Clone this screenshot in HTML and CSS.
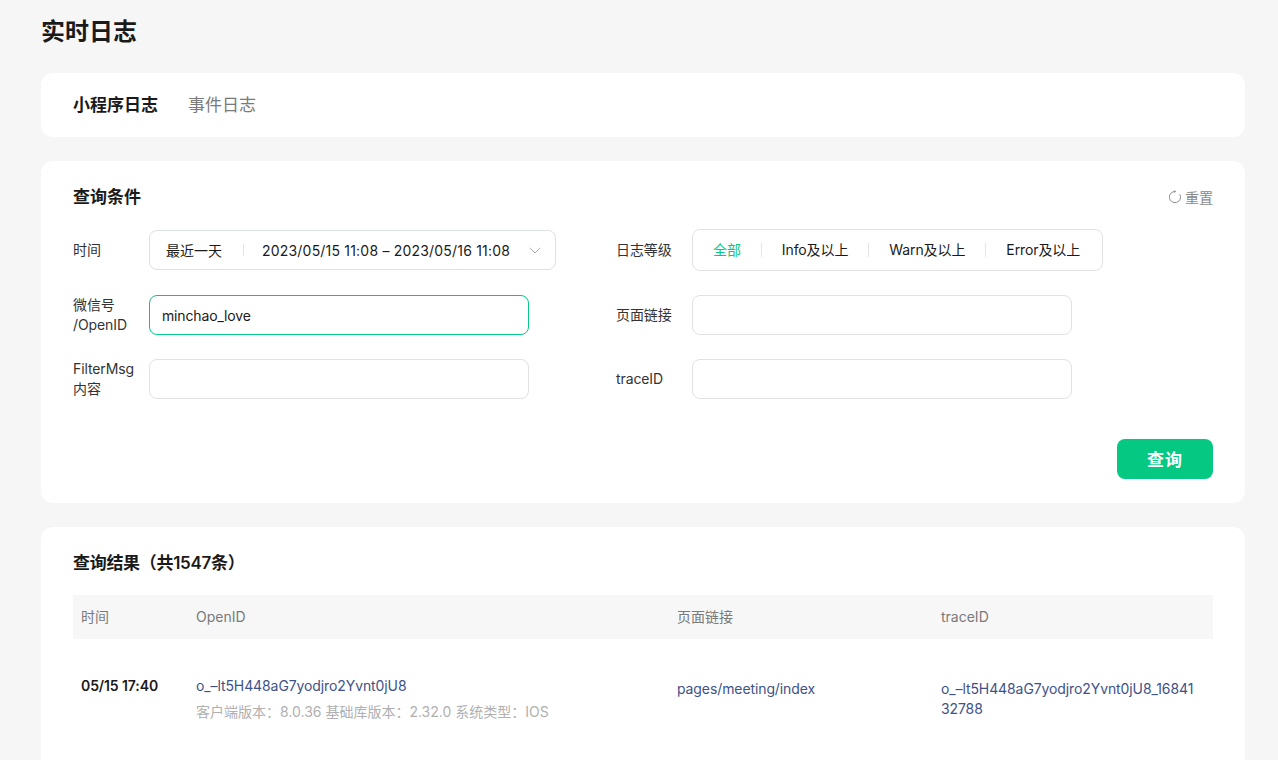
FILE: index.html
```html
<!DOCTYPE html>
<html lang="zh">
<head>
<meta charset="utf-8">
<title>实时日志</title>
<link rel="stylesheet" href="styles.css">
</head>
<body>
<main class="page">
  <h1 class="page-title">实时日志</h1>
  <section class="card tabs">
    <span class="tab active">小程序日志</span>
    <span class="tab">事件日志</span>
  </section>
  <section class="card query">
    <div class="card-head">
      <h2 class="card-title">查询条件</h2>
      <span class="reset">
        <svg class="reset-icon" viewBox="0 0 14 14" width="14" height="14"><path d="M7.6 1.5A5.6 5.6 0 1 0 11.9 4.4M7.6 1.5L6.3 .5M7.6 1.5L6.4 2.7" fill="none" stroke="#8f8f8f" stroke-width="1"/></svg>
        重置
      </span>
    </div>
    <div class="form">
      <div class="field">
        <label class="label">时间</label>
        <div class="control date">
          <span class="preset">最近一天</span>
          <span class="date-sep"></span>
          <span class="range">2023/05/15 11:08 – 2023/05/16 11:08</span>
          <svg class="chev" viewBox="0 0 12 7" width="12" height="7"><path d="M.8 1l5.2 5 5.2-5" fill="none" stroke="#a8a8a8" stroke-width="1"/></svg>
        </div>
      </div>
      <div class="field">
        <label class="label">日志等级</label>
        <div class="levels">
          <span class="level on">全部</span>
          <span class="level">Info及以上</span>
          <span class="level">Warn及以上</span>
          <span class="level">Error及以上</span>
        </div>
      </div>
      <div class="field">
        <label class="label">微信号<br>/OpenID</label>
        <div class="control input focus">minchao_love</div>
      </div>
      <div class="field">
        <label class="label">页面链接</label>
        <div class="control input"></div>
      </div>
      <div class="field">
        <label class="label">FilterMsg<br>内容</label>
        <div class="control input"></div>
      </div>
      <div class="field">
        <label class="label">traceID</label>
        <div class="control input"></div>
      </div>
    </div>
    <div class="actions"><button class="btn" type="button">查询</button></div>
  </section>
  <section class="card result">
    <h2 class="card-title tight">查询结果（共1547条）</h2>
    <div class="table">
      <div class="row head">
        <span>时间</span><span>OpenID</span><span>页面链接</span><span>traceID</span>
      </div>
      <div class="row body">
        <span class="time">05/15 17:40</span>
        <div>
          <div class="link">o_–lt5H448aG7yodjro2Yvnt0jU8</div>
          <div class="meta">客户端版本：8.0.36 基础库版本：2.32.0 系统类型：IOS</div>
        </div>
        <span class="link low">pages/meeting/index</span>
        <span class="link low trace">o_–lt5H448aG7yodjro2Yvnt0jU8_1684132788</span>
      </div>
    </div>
  </section>
</main>
</body>
</html>
```
FILE: styles.css
```css
* { box-sizing: border-box; }
html, body { margin: 0; height: 760px; overflow: hidden; }
body {
  background: #f6f6f6;
  color: #1a1a1a;
  font-family: "Inter", "Noto Sans CJK SC", sans-serif;
  font-size: 14px;
}
.page { width: 1204px; margin-left: 41px; }
.page-title { margin: 0; padding-top: 16px; height: 73px; font-size: 24px; line-height: 32px; font-weight: 600; }
.card { background: #fff; border-radius: 12px; margin-bottom: 24px; padding: 0 32px; }
.tabs { height: 64px; display: flex; align-items: center; gap: 30px; padding-bottom: 4px; }
.tab { font-size: 17px; color: #7a7a7a; }
.tab.active { color: #1a1a1a; font-weight: 600; }
.query { height: 342px; padding-top: 24px; }
.card-head { display: flex; justify-content: space-between; align-items: center; height: 24px; }
.card-title { margin: 0; font-size: 17px; line-height: 24px; font-weight: 600; }
.tight { letter-spacing: -0.3px; }
.reset { display: flex; align-items: center; gap: 3px; color: #8a8a8a; font-size: 14px; }
.reset-icon { display: block; }
.form { display: grid; grid-template-columns: 543px 1fr; row-gap: 24px; margin-top: 20px; }
.field { display: flex; align-items: center; min-height: 40px; }
.label { width: 76px; font-size: 14px; line-height: 20px; color: #333; flex: none; letter-spacing: -0.1px; }
.control { border: 1px solid #e2e2e2; border-radius: 8px; height: 40px; width: 380px; display: flex; align-items: center; padding: 0 12px; font-size: 14px; letter-spacing: -0.15px; }
.focus { border-color: #05c983; }
.date { width: 407px; padding: 0 14px 0 16px; border-color: #dce1e1; letter-spacing: 0; }
.preset { width: 77px; }
.date-sep { width: 1px; height: 12px; background: #e4e4e4; margin-right: 18px; }
.range { flex: 1; letter-spacing: 0.2px; }
.chev { display: block; }
.levels { display: flex; align-items: center; border: 1px solid #e2e2e2; border-radius: 8px; height: 42px; padding-right: 2px; letter-spacing: -0.1px; }
.level { padding: 0 20px; line-height: 14px; }
.level + .level { border-left: 1px solid #e4e4e4; }
.level.on { color: #05c983; }
.actions { display: flex; justify-content: flex-end; margin-top: 40px; }
.btn { width: 96px; height: 40px; border: 0; border-radius: 8px; padding: 0 0 2px; background: #05c983; color: #fff; font: 600 17px "Inter", "Noto Sans CJK SC", sans-serif; letter-spacing: 1px; }
.result { padding-top: 24px; height: 300px; }
.table { margin-top: 20px; }
.row { display: grid; grid-template-columns: 115px 481px 264px 1fr; padding-left: 8px; }
.head { height: 44px; align-items: center; background: #f7f7f7; color: #7a7a7a; padding-bottom: 2px; }
.body { padding-top: 37px; line-height: 20px; }
.time { font-weight: 600; letter-spacing: -0.1px; }
.link { color: #3e5287; letter-spacing: -0.1px; }
.low { padding-top: 3px; }
.meta { color: #b0b0b0; font-size: 14px; margin-top: 6px; }
.trace { width: 256px; word-break: break-all; }
```
